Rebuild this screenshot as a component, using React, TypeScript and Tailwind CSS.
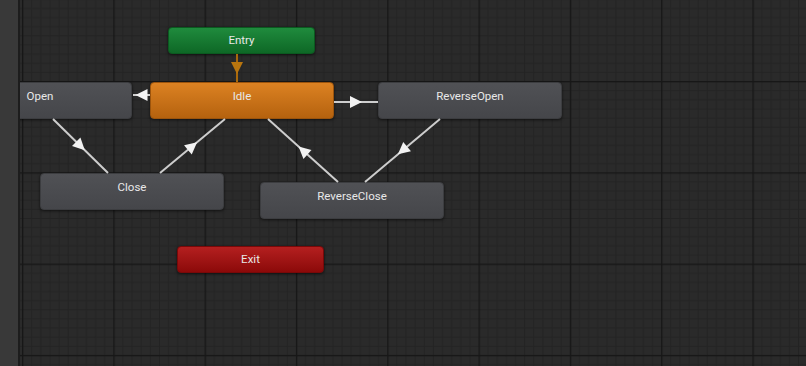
import React from "react";

const OX = 20; // canvas starts at page x = 20

type Edge = { x1: number; y1: number; x2: number; y2: number; orange?: boolean };

const edges: Edge[] = [
  { x1: 237, y1: 54, x2: 237, y2: 82, orange: true },
  { x1: 150, y1: 95, x2: 133, y2: 95 },
  { x1: 334, y1: 102, x2: 378, y2: 102 },
  { x1: 53, y1: 119, x2: 108, y2: 173 },
  { x1: 160, y1: 173, x2: 225, y2: 119 },
  { x1: 338, y1: 182, x2: 268, y2: 119 },
  { x1: 440, y1: 119, x2: 365, y2: 182 },
];

function Arrow({ e }: { e: Edge }) {
  const x1 = e.x1 - OX, x2 = e.x2 - OX;
  const { y1, y2 } = e;
  const dx = x2 - x1, dy = y2 - y1;
  const len = Math.hypot(dx, dy);
  const ux = dx / len, uy = dy / len;
  const px = -uy, py = ux;
  const mx = (x1 + x2) / 2, my = (y1 + y2) / 2;
  const L = 12, W = 6;
  const tip = [mx + ux * L / 2, my + uy * L / 2];
  const b = [mx - ux * L / 2, my - uy * L / 2];
  const pts = `${tip[0]},${tip[1]} ${b[0] + px * W},${b[1] + py * W} ${b[0] - px * W},${b[1] - py * W}`;
  const line = e.orange ? "#a8690c" : "#cdcdcd";
  const head = e.orange ? "#b8750f" : "#f2f2f2";
  return (
    <g>
      <line x1={x1} y1={y1} x2={x2} y2={y2} stroke={line} strokeWidth={2} />
      <polygon points={pts} fill={head} />
    </g>
  );
}

type NodeProps = {
  label: string;
  x: number;
  y: number;
  w: number;
  h: number;
  kind: "gray" | "orange" | "green" | "red";
};

const kindCls: Record<NodeProps["kind"], string> = {
  gray: "bg-linear-to-b from-[#505155] to-[#45464a] border-[#3c3d40]",
  orange: "bg-linear-to-b from-[#dc8222] to-[#b5620e] border-[#9c540c]",
  green: "bg-linear-to-b from-[#1f8b3d] to-[#0e6826] border-[#0b5a20]",
  red: "bg-linear-to-b from-[#b41f1f] to-[#8c0909] border-[#7a0808]",
};

function GraphNode({ label, x, y, w, h, kind }: NodeProps) {
  const small = h < 30;
  return (
    <div
      className={`absolute rounded-[4px] border shadow-[0_1px_3px_rgba(0,0,0,0.6)] flex justify-center ${kindCls[kind]} ${
        small ? "items-center pb-[2px]" : "items-start pt-[5px]"
      }`}
      style={{ left: x - OX, top: y, width: w, height: h }}
    >
      <span className="text-[11.5px] leading-[16px] text-[#e8e8e8] font-['Roboto',sans-serif]">{label}</span>
    </div>
  );
}

export default function App() {
  const major = 91.3;
  const minor = major / 10;
  const minorLines = Array.from({ length: 10 }, (_, i) => i * minor);
  return (
    <div className="w-[806px] h-[366px] flex overflow-hidden bg-[#2a2a2a]">
      <div className="w-[20px] h-full bg-[#393939] border-r-2 border-[#1d1d1d] shrink-0 z-10" />
      <div className="relative flex-1 h-full overflow-hidden">
        <svg className="absolute inset-0" width={786} height={366}>
          <defs>
            <pattern id="grid" patternUnits="userSpaceOnUse" x={2} y={-10.3} width={major} height={major}>
              <rect width={major} height={major} fill="#2a2a2a" />
              {minorLines.map((p, i) => (
                <g key={i}>
                  <rect x={p} y={0} width={1} height={major} fill="#232323" />
                  <rect x={0} y={p} width={major} height={1} fill="#232323" />
                </g>
              ))}
              <rect x={0} y={0} width={1.4} height={major} fill="#171717" />
              <rect x={0} y={0} width={major} height={1.4} fill="#171717" />
            </pattern>
          </defs>
          <rect width={786} height={366} fill="url(#grid)" />
        </svg>

        <GraphNode label="Open" x={-52} y={82} w={184} h={37} kind="gray" />
        <GraphNode label="Entry" x={168} y={27} w={147} h={27} kind="green" />
        <GraphNode label="Idle" x={150} y={82} w={184} h={37} kind="orange" />
        <GraphNode label="ReverseOpen" x={378} y={82} w={184} h={37} kind="gray" />
        <GraphNode label="Close" x={40} y={173} w={184} h={37} kind="gray" />
        <GraphNode label="ReverseClose" x={260} y={182} w={184} h={37} kind="gray" />
        <GraphNode label="Exit" x={177} y={246} w={147} h={27} kind="red" />

        <svg className="absolute inset-0 pointer-events-none" width={786} height={366}>
          {edges.map((e, i) => (
            <Arrow key={i} e={e} />
          ))}
        </svg>
      </div>
    </div>
  );
}
